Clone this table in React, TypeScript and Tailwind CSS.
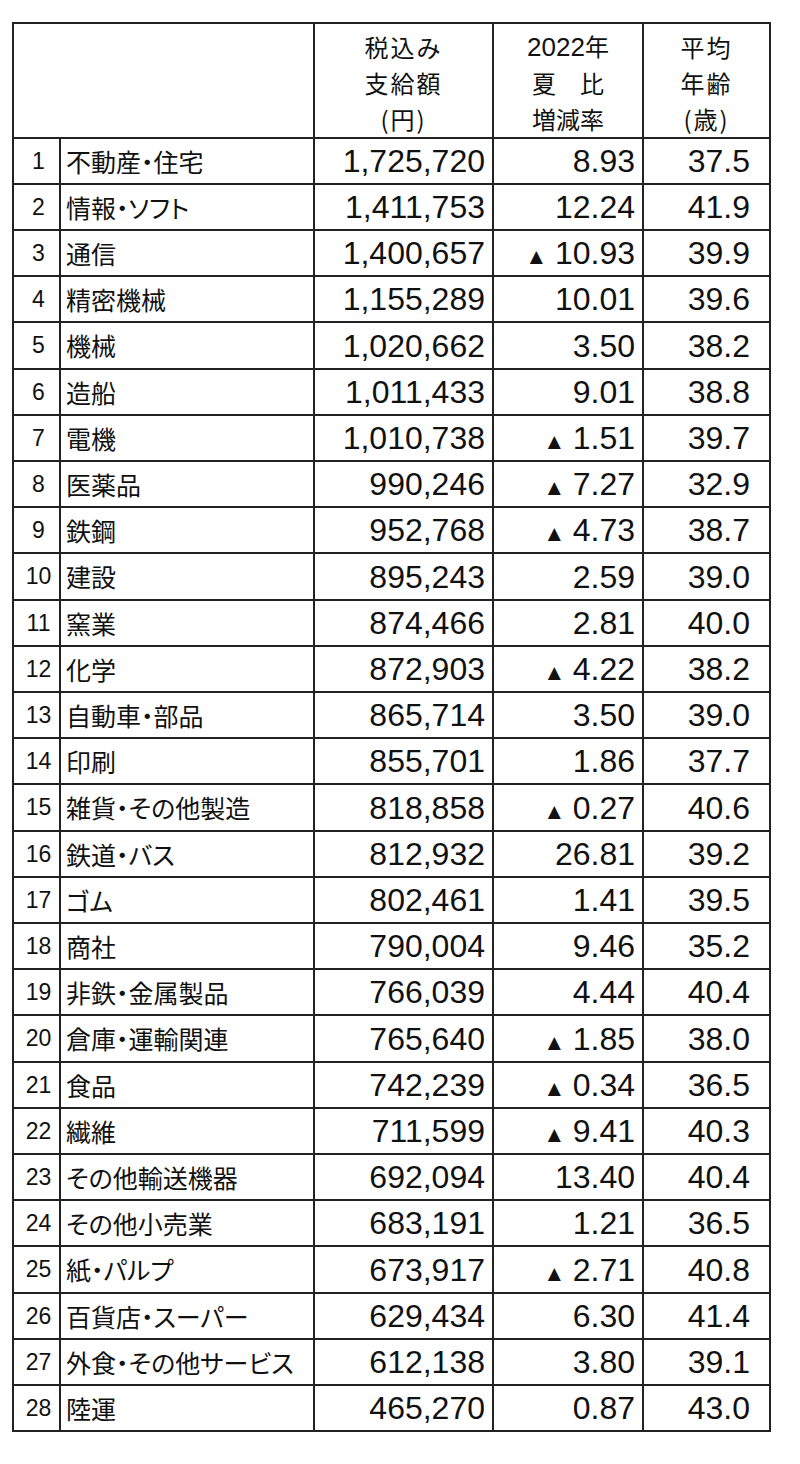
const rows: [string, string, string, string][] = [
  ["不動産・住宅", "1,725,720", "8.93", "37.5"],
  ["情報・ソフト", "1,411,753", "12.24", "41.9"],
  ["通信", "1,400,657", "▲10.93", "39.9"],
  ["精密機械", "1,155,289", "10.01", "39.6"],
  ["機械", "1,020,662", "3.50", "38.2"],
  ["造船", "1,011,433", "9.01", "38.8"],
  ["電機", "1,010,738", "▲1.51", "39.7"],
  ["医薬品", "990,246", "▲7.27", "32.9"],
  ["鉄鋼", "952,768", "▲4.73", "38.7"],
  ["建設", "895,243", "2.59", "39.0"],
  ["窯業", "874,466", "2.81", "40.0"],
  ["化学", "872,903", "▲4.22", "38.2"],
  ["自動車・部品", "865,714", "3.50", "39.0"],
  ["印刷", "855,701", "1.86", "37.7"],
  ["雑貨・その他製造", "818,858", "▲0.27", "40.6"],
  ["鉄道・バス", "812,932", "26.81", "39.2"],
  ["ゴム", "802,461", "1.41", "39.5"],
  ["商社", "790,004", "9.46", "35.2"],
  ["非鉄・金属製品", "766,039", "4.44", "40.4"],
  ["倉庫・運輸関連", "765,640", "▲1.85", "38.0"],
  ["食品", "742,239", "▲0.34", "36.5"],
  ["繊維", "711,599", "▲9.41", "40.3"],
  ["その他輸送機器", "692,094", "13.40", "40.4"],
  ["その他小売業", "683,191", "1.21", "36.5"],
  ["紙・パルプ", "673,917", "▲2.71", "40.8"],
  ["百貨店・スーパー", "629,434", "6.30", "41.4"],
  ["外食・その他サービス", "612,138", "3.80", "39.1"],
  ["陸運", "465,270", "0.87", "43.0"],
];

function Rate({ value }: { value: string }) {
  if (value.startsWith("▲")) {
    return (
      <span>
        <span className="mr-[12px] align-[2px] font-['DejaVu_Sans',sans-serif] text-[17px]">▲</span>
        {value.slice(1)}
      </span>
    );
  }
  return <span>{value}</span>;
}

export default function App() {
  return (
    <div className="min-h-[1464px] w-[800px] bg-white pl-[12px] pt-[22px] font-['Liberation_Sans','Noto_Sans_CJK_JP',sans-serif] text-[#111]">
      <table className="w-[757px] table-fixed border-collapse border-2 border-[#222]">
        <colgroup>
          <col className="w-[47px]" />
          <col className="w-[254px]" />
          <col className="w-[179px]" />
          <col className="w-[150px]" />
          <col className="w-[127px]" />
        </colgroup>
        <thead>
          <tr className="h-[114px] text-[24px] leading-[36px] font-['Noto_Sans_CJK_JP',sans-serif]">
            <th colSpan={2} className="border-2 border-[#222]"></th>
            <th className="border-2 border-[#222] pt-1 font-normal tracking-[2px]">
              税込み
              <br />
              支給額
              <br />
              (円)
            </th>
            <th className="border-2 border-[#222] pt-1 font-normal">
              <span className="font-['Liberation_Sans','Noto_Sans_CJK_JP',sans-serif] text-[26px]">2022</span>年
              <br />
              夏　比
              <br />
              増減率
            </th>
            <th className="border-2 border-[#222] pt-1 font-normal tracking-[2px]">
              平均
              <br />
              年齢
              <br />
              (歳)
            </th>
          </tr>
        </thead>
        <tbody>
          {rows.map(([name, pay, rate, age], i) => (
            <tr key={i} className={i % 5 === 4 ? "h-[47px] leading-none" : "h-[46px] leading-none"}>
              <td className="border-2 border-[#222] pl-1 text-center font-['Liberation_Sans_Narrow','Liberation_Sans',sans-serif] text-[23px]">
                {i + 1}
              </td>
              <td className="border-2 border-[#222] pl-[5px] font-['Noto_Sans_CJK_JP',sans-serif] text-[25px] whitespace-nowrap [font-feature-settings:'palt']">
                {name}
              </td>
              <td className="border-2 border-[#222] pr-[7px] text-right text-[32px]">{pay}</td>
              <td className="border-2 border-[#222] pr-[7px] text-right text-[32px]">
                <Rate value={rate} />
              </td>
              <td className="border-2 border-[#222] pr-[19px] text-right text-[32px]">{age}</td>
            </tr>
          ))}
        </tbody>
      </table>
    </div>
  );
}
